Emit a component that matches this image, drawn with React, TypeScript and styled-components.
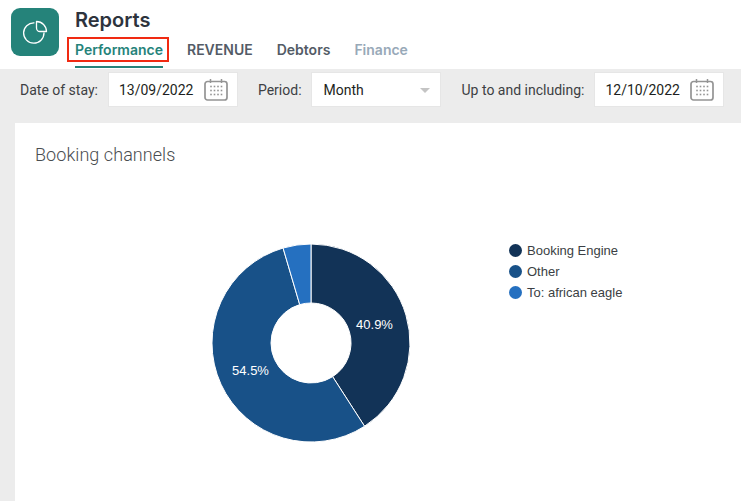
import React from "react";
import styled, { createGlobalStyle } from "styled-components";

const Global = createGlobalStyle`
  html, body { margin: 0; padding: 0; background: #fff; }
  body { width: 741px; height: 501px; overflow: hidden; font-family: Roboto, "Liberation Sans", sans-serif; }
  * { box-sizing: border-box; }
`;

const Page = styled.div`
  width: 741px;
  height: 501px;
  display: flex;
  flex-direction: column;
  overflow: hidden;
`;

const Header = styled.header`
  height: 69px;
  flex: none;
  display: flex;
  padding: 8px 0 0 11px;
  gap: 16px;
`;

const Logo = styled.div`
  width: 48px;
  height: 48px;
  border-radius: 9px;
  background: #25837a;
  display: flex;
  align-items: center;
  justify-content: center;
`;

const HeaderText = styled.div`
  display: flex;
  flex-direction: column;
  margin-top: -1px;
`;

const Title = styled.h1`
  margin: 0;
  height: 26px;
  font: 600 20px/26px Inter, sans-serif;
  color: #2d333d;
`;

const Tabs = styled.nav`
  display: flex;
  gap: 24px;
  margin-top: 7px;
`;

const Tab = styled.div<{ $active?: boolean; $muted?: boolean }>`
  height: 28px;
  font: 600 14px/19px Inter, sans-serif;
  color: ${(p) => (p.$active ? "#25837a" : p.$muted ? "#98a9b8" : "#535b66")};
  border-bottom: 2px solid ${(p) => (p.$active ? "#25837a" : "transparent")};
  position: relative;
`;

const Highlight = styled.span`
  position: absolute;
  left: -8px;
  right: -6px;
  top: -3px;
  height: 25px;
  border: 2.5px solid #f02a12;
`;

const FilterBar = styled.div`
  height: 54px;
  flex: none;
  background: #ececec;
  display: flex;
  align-items: flex-start;
  padding: 3px 0 0 20px;
`;

const Label = styled.span<{ $gap: number }>`
  font: 400 14px/37px Roboto, sans-serif;
  color: #3d4043;
  margin-right: ${(p) => p.$gap}px;
`;

const Field = styled.div<{ $width: number; $gap: number }>`
  width: ${(p) => p.$width}px;
  height: 35px;
  margin-right: ${(p) => p.$gap}px;
  background: #fff;
  border: 1px solid #e6e6e6;
  display: flex;
  align-items: center;
  justify-content: space-between;
  padding: 0 9px 0 10px;
  font: 400 14px/33px Roboto, sans-serif;
  color: #1d1f21;
`;

const FieldText = styled.span<{ $inset?: number }>`
  margin-left: ${(p) => p.$inset ?? 0}px;
  padding-top: 2px;
`;

const Caret = styled.span`
  width: 0;
  height: 0;
  border-left: 5px solid transparent;
  border-right: 5px solid transparent;
  border-top: 5px solid #c4c4c4;
  margin: 2px 1px 0 0;
`;

const Body = styled.main`
  flex: 1;
  background: #ececec;
  padding-left: 15px;
`;

const Card = styled.section`
  height: 100%;
  background: #fff;
  padding: 20px 0 0 20px;
`;

const CardTitle = styled.h2`
  margin: 0;
  font: 300 18px/24px Roboto, sans-serif;
  letter-spacing: 0.06px;
  color: #4a4d50;
`;

const ChartRow = styled.div`
  display: flex;
  align-items: flex-start;
  margin: 76px 0 0 176px;
`;

const Legend = styled.ul`
  list-style: none;
  margin: -3px 0 0 98px;
  padding: 0;
  display: flex;
  flex-direction: column;
`;

const LegendItem = styled.li`
  display: flex;
  align-items: center;
  gap: 5px;
  height: 21px;
  font: 400 13px/21px "Liberation Sans", Arial, sans-serif;
  color: #3b3f44;
`;

const Dot = styled.span<{ $color: string }>`
  width: 13px;
  height: 13px;
  border-radius: 50%;
  background: ${(p) => p.$color};
`;

const CalendarIcon = () => (
  <svg width="24" height="24" viewBox="0 0 24 24" fill="none" stroke="#949494">
    <rect x="1" y="3.5" width="22" height="18.5" rx="2.5" strokeWidth="1.7" />
    <path d="M6.5 1v4M17.5 1v4" strokeWidth="1.5" />
    <g stroke="none" fill="#949494">
      {[8.5, 12.5, 16.5].map((y) =>
        [7, 10.5, 14, 17.5].map((x) => <rect key={`${x}-${y}`} x={x - 0.8} y={y - 0.8} width="1.6" height="1.6" />)
      )}
    </g>
  </svg>
);

const cx = 100;
const cy = 100;
const R = 99;
const r = 40;

function slice(from: number, to: number) {
  const pt = (rad: number, pct: number) => {
    const a = (pct / 100) * 2 * Math.PI - Math.PI / 2;
    return `${(cx + rad * Math.cos(a)).toFixed(2)} ${(cy + rad * Math.sin(a)).toFixed(2)}`;
  };
  const large = to - from > 50 ? 1 : 0;
  return `M${pt(R, from)}A${R} ${R} 0 ${large} 1 ${pt(R, to)}L${pt(r, to)}A${r} ${r} 0 ${large} 0 ${pt(r, from)}Z`;
}

const Donut = () => (
  <svg width="200" height="200" viewBox="0 0 200 200">
    <path d={slice(0, 40.9)} fill="#123357" stroke="#fff" strokeWidth="1" />
    <path d={slice(40.9, 95.45)} fill="#185188" stroke="#fff" strokeWidth="1" />
    <path d={slice(95.45, 100)} fill="#2570c0" stroke="#fff" strokeWidth="1" />
    <g fill="#fff" fontFamily="'Liberation Sans', Arial, sans-serif" fontSize="13" textAnchor="middle">
      <text x="163.5" y="85.5">40.9%</text>
      <text x="39.5" y="132">54.5%</text>
    </g>
  </svg>
);

const legend = [
  { name: "Booking Engine", color: "#123357" },
  { name: "Other", color: "#185188" },
  { name: "To: african eagle", color: "#2570c0" },
];

export default function App() {
  return (
    <Page>
      <Global />
      <Header>
        <Logo>
          <svg width="26" height="26" viewBox="0 0 26 26" fill="none" stroke="#fff" strokeWidth="1.3">
            <path d="M12 3.8A10.2 10.2 0 1 0 22 14" strokeLinecap="round" />
            <path d="M14.5 2.5A10 10 0 0 1 24.5 12.5H18A3.5 3.5 0 0 1 14.5 9Z" strokeLinejoin="round" />
          </svg>
        </Logo>
        <HeaderText>
          <Title>Reports</Title>
          <Tabs>
            <Tab $active>
              Performance
              <Highlight />
            </Tab>
            <Tab>REVENUE</Tab>
            <Tab>Debtors</Tab>
            <Tab $muted>Finance</Tab>
          </Tabs>
        </HeaderText>
      </Header>
      <FilterBar>
        <Label $gap={10}>Date of stay:</Label>
        <Field $width={130} $gap={20}>
          <FieldText>13/09/2022</FieldText>
          <CalendarIcon />
        </Field>
        <Label $gap={9}>Period:</Label>
        <Field $width={130} $gap={21}>
          <FieldText $inset={2}>Month</FieldText>
          <Caret />
        </Field>
        <Label $gap={10}>Up to and including:</Label>
        <Field $width={130} $gap={0}>
          <FieldText>12/10/2022</FieldText>
          <CalendarIcon />
        </Field>
      </FilterBar>
      <Body>
        <Card>
          <CardTitle>Booking channels</CardTitle>
          <ChartRow>
            <Donut />
            <Legend>
              {legend.map((l) => (
                <LegendItem key={l.name}>
                  <Dot $color={l.color} />
                  {l.name}
                </LegendItem>
              ))}
            </Legend>
          </ChartRow>
        </Card>
      </Body>
    </Page>
  );
}
